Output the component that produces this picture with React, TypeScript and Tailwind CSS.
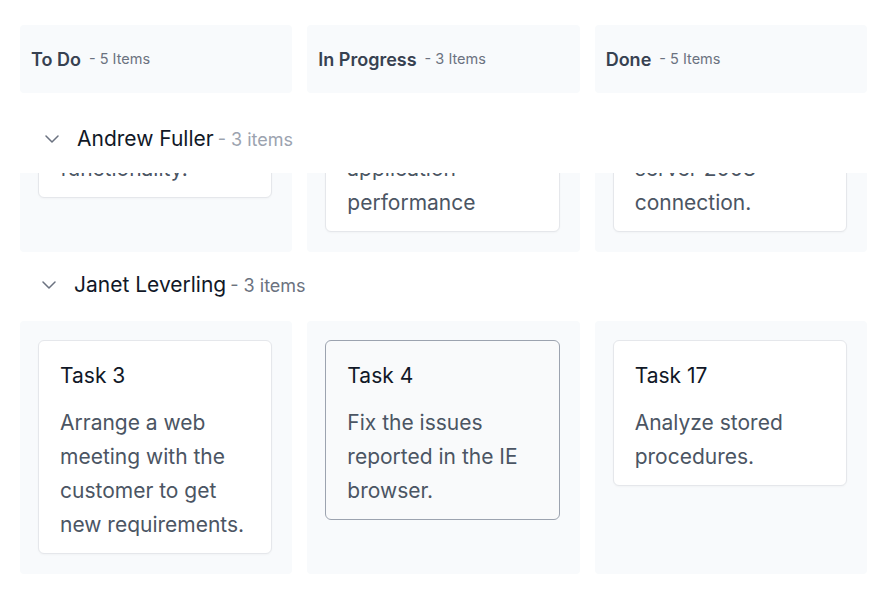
import React from 'react';

type Card = { title: string; lines: string[]; hover?: boolean };

const columns = [
  { name: 'To Do', count: 5 },
  { name: 'In Progress', count: 3 },
  { name: 'Done', count: 5 },
];

// Cards per swimlane, one entry for each column
const andrewCards: Card[] = [
  { title: 'Task 9', lines: ['Add the PDF export', 'functionality.'] },
  { title: 'Task 2', lines: ['Improve', 'application', 'performance'] },
  { title: 'Task 6', lines: ['Check the SQL', 'server 2008', 'connection.'] },
];

const janetCards: Card[] = [
  { title: 'Task 3', lines: ['Arrange a web', 'meeting with the', 'customer to get', 'new requirements.'] },
  { title: 'Task 4', lines: ['Fix the issues', 'reported in the IE', 'browser.'], hover: true },
  { title: 'Task 17', lines: ['Analyze stored', 'procedures.'] },
];

function Chevron() {
  return (
    <svg width="14" height="8" viewBox="0 0 14 8" fill="none" className="shrink-0">
      <polyline points="1,1 7,7 13,1" stroke="#6b7280" strokeWidth="1.5" strokeLinecap="round" strokeLinejoin="round" />
    </svg>
  );
}

function TaskCard({ card }: { card: Card }) {
  return (
    <div
      className={
        card.hover
          ? 'rounded-md border border-[#9ca3af] bg-[#f9fafb] pt-[21px] pb-[11px] px-[21px]'
          : 'rounded-md border border-[#e5e7eb] bg-white pt-[21px] pb-[11px] px-[21px] shadow-[0_1px_2px_rgba(0,0,0,0.03)]'
      }
    >
      <h3 className="text-[21px] leading-7 font-normal text-[#111827]">{card.title}</h3>
      <p className="mt-4 text-[21px] leading-[34px] text-[#4b5563]">
        {card.lines.map((l, i) => (
          <span key={i} className="block whitespace-nowrap">{l}</span>
        ))}
      </p>
    </div>
  );
}

function LaneBody({ cards }: { cards: Card[] }) {
  return (
    <div className="grid grid-cols-3 gap-[15px]">
      {cards.map((c, i) => (
        <div key={i} className="rounded bg-[#f8fafc] pt-[19px] pb-5 pl-[18px] pr-5">
          <TaskCard card={c} />
        </div>
      ))}
    </div>
  );
}

function LaneHeader({ name, count, muted }: { name: string; count: number; muted?: boolean }) {
  return (
    <div className="flex items-baseline pl-[22px]">
      <span className="self-center mr-[18px]">
        <Chevron />
      </span>
      <span className="text-[21px] text-[#111827]">{name}</span>
      <span className={muted ? 'ml-1 text-[18px] text-[#9ca3af]' : 'ml-1 text-[18px] text-[#6b7280]'}>
        - {count} items
      </span>
    </div>
  );
}

export default function App() {
  return (
    <div className="h-[599px] overflow-hidden bg-white pl-5 pr-[15px] pt-[25px]" style={{ fontFamily: 'Inter, "Noto Sans", sans-serif' }}>
      {/* column headers */}
      <div className="grid grid-cols-3 gap-[15px]">
        {columns.map((col) => (
          <div key={col.name} className="h-[68px] rounded bg-[#f8fafc] px-[11px] flex items-center">
            <span className="text-[18px] font-semibold text-[#374151]">{col.name}</span>
            <span className="ml-2 text-[14.5px] text-[#6b7280]">- {col.count} Items</span>
          </div>
        ))}
      </div>

      {/* sticky swimlane, scrolled part way */}
      <div className="h-[80px] pt-[11px] flex items-center">
        <div className="ml-[3px]">
          <LaneHeader name="Andrew Fuller" count={3} muted />
        </div>
      </div>
      <div className="h-[79px] overflow-hidden">
        <div className="-mt-[140px]">
          <LaneBody cards={andrewCards} />
        </div>
      </div>

      <div className="h-[69px] pb-[3px] flex items-center">
        <LaneHeader name="Janet Leverling" count={3} />
      </div>
      <LaneBody cards={janetCards} />

      <div className="h-[69px] pt-[2px] flex items-center">
        <LaneHeader name="Margaret Peacock" count={3} />
      </div>
    </div>
  );
}
